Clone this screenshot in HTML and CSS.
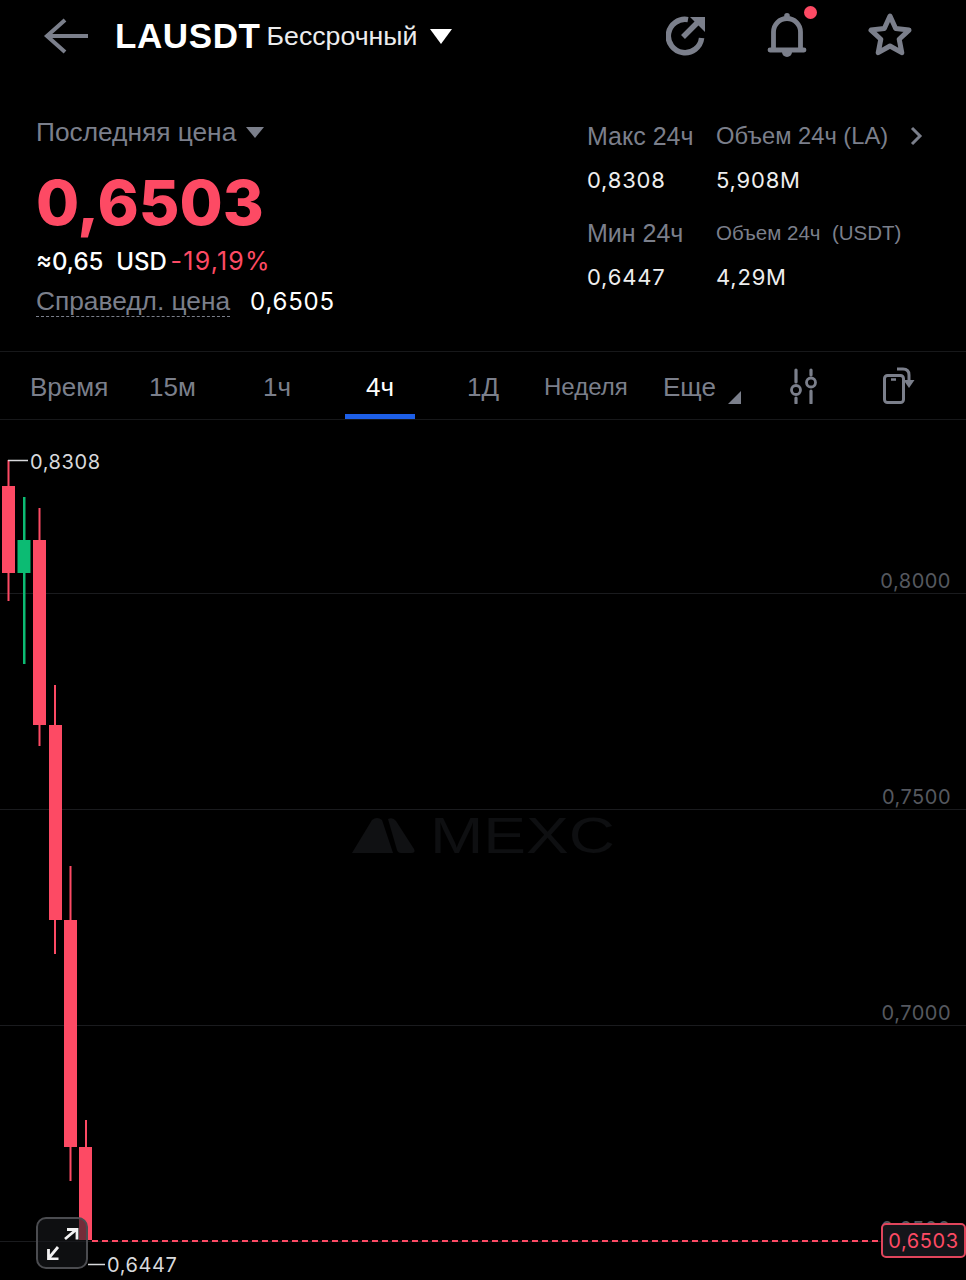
FILE: index.html
```html
<!DOCTYPE html>
<html lang="ru">
<head>
    <meta charset="UTF-8">
    <meta name="viewport" content="width=device-width, initial-scale=1.0">
    <title>LAUSDT</title>
    <link rel="stylesheet" href="styles.css">
</head>
<body>
    <!-- шапка -->
    <header class="top-bar">
        <svg class="icon-back" width="46" height="38" viewBox="0 0 46 38"><path d="M22 3 4 19l18 16M4 19h41" fill="none" stroke="#7b7f8b" stroke-width="4"/></svg>
        <span class="symbol">LAUSDT</span>
        <span class="symbol-type">Бессрочный</span>
        <span class="caret caret-white"></span>
        <div class="top-actions">
            <svg class="action" width="40" height="44" viewBox="0 0 40 44"><path d="M35.600 24A16.700 16.700 0 1 1 22 5.600" fill="none" stroke="#7b7f8b" stroke-width="5.500"/><path d="M17 23 32 8" stroke="#7b7f8b" stroke-width="5.500" fill="none"/><path d="M24 3h15v15z" fill="#7b7f8b"/></svg>
            <div class="bell">
                <svg width="44" height="46" viewBox="0 0 44 46"><path d="M6 37h34M9.500 36V19a13.500 13.500 0 0 1 27 0v17" fill="none" stroke="#7b7f8b" stroke-width="4.800" stroke-linecap="round"/><circle cx="23" cy="2.800" r="2.800" fill="#7b7f8b"/><path d="M18 39h10a5 5 0 0 1-10 0z" fill="#7b7f8b"/></svg>
                <span class="bell-dot"></span>
            </div>
            <svg class="action" width="48" height="46" viewBox="0 0 48 46"><path d="m24 3 5.700 12.500 13.300 1.600-9.800 9.200 2.600 13.400L24 33l-11.800 6.700 2.600-13.400L5 17.100l13.300-1.600z" fill="none" stroke="#7b7f8b" stroke-width="5" stroke-linejoin="round"/></svg>
        </div>
    </header>

    <!-- цена -->
    <section class="ticker">
        <div class="price-block">
            <div class="last-label">Последняя цена <span class="caret caret-grey"></span></div>
            <div class="last-price">0,6503</div>
            <div class="usd-row"><span class="usd">≈0,65&nbsp; USD</span> <span class="change">-19,19%</span></div>
            <div class="fair-row"><span class="fair-label">Справедл. цена</span><span class="fair-value">0,6505</span></div>
        </div>
        <div class="stats">
            <div class="stat-col stat-narrow">
                <div class="stat-name stat-big">Макс 24ч</div>
                <div class="stat-value">0,8308</div>
                <div class="stat-name stat-big stat-gap">Мин 24ч</div>
                <div class="stat-value">0,6447</div>
            </div>
            <div class="stat-col stat-wide">
                <div class="stat-name">Объем 24ч (LA)</div>
                <div class="stat-value">5,908M</div>
                <div class="stat-name stat-gap stat-small">Объем 24ч &nbsp;(USDT)</div>
                <div class="stat-value">4,29M</div>
            </div>
            <svg class="chevron" width="14" height="20" viewBox="0 0 14 20"><path d="m3 2 8 8-8 8" fill="none" stroke="#7b7f8b" stroke-width="3"/></svg>
        </div>
    </section>

    <!-- интервалы -->
    <nav class="tabs">
        <span class="tab tab-time">Время</span>
        <span class="tab tab-15">15м</span>
        <span class="tab tab-1h">1ч</span>
        <span class="tab tab-active">4ч</span>
        <span class="tab tab-1d">1Д</span>
        <span class="tab tab-week">Неделя</span>
        <span class="tab tab-more">Еще<i class="corner"></i></span>
        <svg class="tab-icon" width="30" height="36" viewBox="0 0 30 36"><path d="M7 2v12M7 30v5M22 2v5M22 23v12" stroke="#7b7f8b" stroke-width="3.200" fill="none" stroke-linecap="round"/><circle cx="7" cy="22" r="4.500" fill="none" stroke="#7b7f8b" stroke-width="2.800"/><circle cx="22" cy="14.500" r="4.500" fill="none" stroke="#7b7f8b" stroke-width="2.800"/></svg>
        <svg class="tab-icon tab-icon-last" width="34" height="38" viewBox="0 0 34 38"><rect x="3.500" y="8.500" width="19" height="27" rx="3" fill="none" stroke="#7b7f8b" stroke-width="3"/><path d="M10 12.500h5" stroke="#7b7f8b" stroke-width="2.500"/><path d="M16 2h6c4 0 6 2 6 6v6" fill="none" stroke="#7b7f8b" stroke-width="3"/><path d="M22.500 13h11l-5.500 8z" fill="#7b7f8b"/></svg>
    </nav>

    <!-- график -->
    <main class="chart">
        <svg class="chart-svg" width="966" height="860" viewBox="0 420 966 860">
            <g stroke="#1a1b1e" stroke-width="1">
                <path d="M0 593.500h966M0 809.500h966M0 1025.500h966M0 1241.500h966"/>
            </g>
            <!-- логотип -->
            <g fill="#101113">
                <path d="M352 853 372 820q5-4 10 0l11 33z"/>
                <path d="M388 819q5-2 8 2l18 28q2 4-3 4h-10q-3 0-4-3z"/>
            </g>
            <text class="watermark" x="430" y="853" textLength="185" lengthAdjust="spacingAndGlyphs">MEXC</text>
            <!-- свечи -->
            <g fill="#fd4a64">
                <rect x="7.500" y="460" width="2" height="141"/><rect x="2" y="486" width="13" height="87"/>
                <rect x="38.500" y="508" width="2" height="238"/><rect x="33" y="540" width="13" height="185"/>
                <rect x="54" y="685" width="2" height="269"/><rect x="49" y="725" width="13" height="195"/>
                <rect x="69.500" y="866" width="2" height="315"/><rect x="64" y="920" width="13" height="227"/>
                <rect x="85" y="1120" width="2" height="120"/><rect x="79" y="1147" width="13" height="93"/>
            </g>
            <g fill="#0cbb73">
                <rect x="23" y="497" width="2.500" height="167"/><rect x="17.500" y="540" width="13" height="33"/>
            </g>
            <path d="M8 460.500h20M88 1264.500h17" stroke="#d8d9dc" stroke-width="1.500"/>
            <path d="M92 1241h790" stroke="#fd4a64" stroke-width="2" stroke-dasharray="6 4"/>
        </svg>
        <span class="hl-label hl-high">0,8308</span>
        <span class="hl-label hl-low">0,6447</span>
        <span class="axis-label axis-80">0,8000</span>
        <span class="axis-label axis-75">0,7500</span>
        <span class="axis-label axis-70">0,7000</span>
        <span class="axis-label axis-65">0,6500</span>
        <span class="price-tag">0,6503</span>
        <button class="expand">
            <svg width="32" height="32" viewBox="0 0 32 32"><path d="M18 11 30 1M20 1.500h10v10M11 19 1 31M1.500 21v10h10" fill="none" stroke="#f2f2f3" stroke-width="2.800"/></svg>
        </button>
    </main>
</body>
</html>
```
FILE: styles.css
```css
* {
    box-sizing: border-box;
}
body {
    margin: 0;
    width: 966px;
    height: 1280px;
    overflow: hidden;
    background: #000;
    color: #fff;
    font-family: "Liberation Sans", Arial, sans-serif;
}
.top-bar {
    height: 72px;
    display: flex;
    align-items: center;
    padding-left: 43px;
}
.symbol {
    margin-left: 26px;
    font-size: 35px;
    font-weight: bold;
    letter-spacing: 0.6px;
}
.symbol-type {
    margin-left: 6px;
    font-size: 26.7px;
    color: #ececed;
}
.caret {
    display: inline-block;
    width: 0;
    height: 0;
    border-left: 11px solid transparent;
    border-right: 11px solid transparent;
}
.caret-white {
    margin-left: 13px;
    border-top: 15px solid #fff;
}
.caret-grey {
    margin-left: 2px;
    vertical-align: 3px;
    border-left-width: 9px;
    border-right-width: 9px;
    border-top: 11px solid #7b7f8b;
}
.top-actions {
    margin-left: auto;
    display: flex;
    align-items: center;
    gap: 58px;
    padding-right: 52px;
}
.action {
    display: block;
}
.bell {
    position: relative;
    height: 46px;
}
.bell-dot {
    position: absolute;
    top: -7px;
    right: -9px;
    width: 13px;
    height: 13px;
    border-radius: 50%;
    background: #fd4a64;
}
.ticker {
    height: 280px;
    border-bottom: 1px solid #17181a;
    display: flex;
    justify-content: space-between;
    padding: 45px 0 0 36px;
}
.last-label {
    font-size: 26.3px;
    line-height: 30px;
    color: #7b7f8b;
}
.last-price {
    margin-top: 21px;
    font-family: Inter, "Liberation Sans", sans-serif;
    font-size: 62.5px;
    line-height: 68px;
    font-weight: 800;
    color: #fd4a64;
}
.usd-row {
    margin-top: 10px;
    font-family: Inter, "Liberation Sans", sans-serif;
    font-size: 24px;
    line-height: 30px;
    white-space: nowrap;
}
.usd {
    font-weight: 500;
}
.change {
    font-size: 25px;
    color: #fd4a64;
    letter-spacing: 1.2px;
    margin-left: -3px;
}
.fair-row {
    margin-top: 8px;
    line-height: 32px;
    white-space: nowrap;
}
.fair-label {
    font-size: 26.3px;
    color: #7b7f8b;
    border-bottom: 1px dashed #7b7f8b;
}
.fair-value {
    margin-left: 20px;
    font-family: Inter, "Liberation Sans", sans-serif;
    font-size: 24px;
    letter-spacing: 0.8px;
}
.stats {
    display: flex;
    padding-top: 3px;
    padding-right: 43px;
}
.stat-col {
    display: flex;
    flex-direction: column;
}
.stat-narrow {
    width: 129px;
}
.stat-wide {
    width: 188px;
}
.stat-name {
    height: 32px;
    font-size: 23.7px;
    line-height: 32px;
    color: #7b7f8b;
    white-space: nowrap;
}
.stat-big {
    font-size: 25px;
}
.stat-small {
    font-size: 20.5px;
}
.stat-value {
    margin-top: 12px;
    height: 32px;
    font-family: Inter, "Liberation Sans", sans-serif;
    font-size: 22px;
    line-height: 32px;
    letter-spacing: 0.8px;
    color: #eee;
}
.stat-gap {
    margin-top: 21px;
}
.chevron {
    margin-left: 5px;
    margin-top: 6px;
}
.tabs {
    height: 68px;
    border-bottom: 1px solid #17181a;
    display: flex;
    align-items: center;
    position: relative;
    font-size: 26px;
    color: #7b7f8b;
}
.tab {
    position: absolute;
    top: 20px;
    line-height: 30px;
    white-space: nowrap;
}
.tab-time { left: 30px; }
.tab-15 { left: 149px; }
.tab-1h { left: 263px; }
.tab-1d { left: 467px; }
.tab-week { left: 544px; font-size: 24px; }
.tab-more { left: 663px; }
.tab-active {
    left: 345px;
    width: 70px;
    height: 47px;
    text-align: center;
    color: #fff;
    border-bottom: 5px solid #1d5fe8;
}
.corner {
    position: absolute;
    left: 65px;
    top: 19px;
    width: 0;
    height: 0;
    border-left: 13px solid transparent;
    border-bottom: 13px solid #7b7f8b;
}
.tab-icon {
    position: absolute;
    left: 789px;
    top: 16px;
}
.tab-icon-last {
    left: 881px;
    top: 15px;
}
.chart {
    position: relative;
    height: 860px;
}
.chart-svg {
    display: block;
}
.watermark {
    font-family: "Liberation Sans", sans-serif;
    font-size: 50px;
    fill: #0e0f11;
}
.hl-label {
    position: absolute;
    left: 30px;
    font-family: Inter, "Liberation Sans", sans-serif;
    font-size: 20px;
    line-height: 24px;
    letter-spacing: 0.6px;
    color: #d8d9dc;
}
.hl-high { top: 30px; }
.hl-low { left: 107px; top: 833px; }
.axis-label {
    position: absolute;
    right: 15px;
    font-family: Inter, "Liberation Sans", sans-serif;
    font-size: 20px;
    line-height: 24px;
    letter-spacing: 0.5px;
    color: #55585f;
}
.axis-80 { top: 149px; }
.axis-75 { top: 365px; }
.axis-70 { top: 581px; }
.axis-65 { top: 797px; }
.price-tag {
    position: absolute;
    left: 881px;
    top: 803px;
    width: 85px;
    height: 35px;
    border: 2px solid #e0455c;
    border-radius: 5px;
    background: #14151a;
    color: #fd4a64;
    font-family: Inter, "Liberation Sans", sans-serif;
    font-size: 20px;
    line-height: 33px;
    letter-spacing: 0.6px;
    text-align: center;
}
.expand {
    position: absolute;
    left: 36px;
    top: 797px;
    width: 52px;
    height: 52px;
    padding: 9px;
    border: 2px solid #4b4c50;
    border-radius: 10px;
    background: rgba(24, 25, 28, 0.6);
}
.expand svg {
    display: block;
}
```
